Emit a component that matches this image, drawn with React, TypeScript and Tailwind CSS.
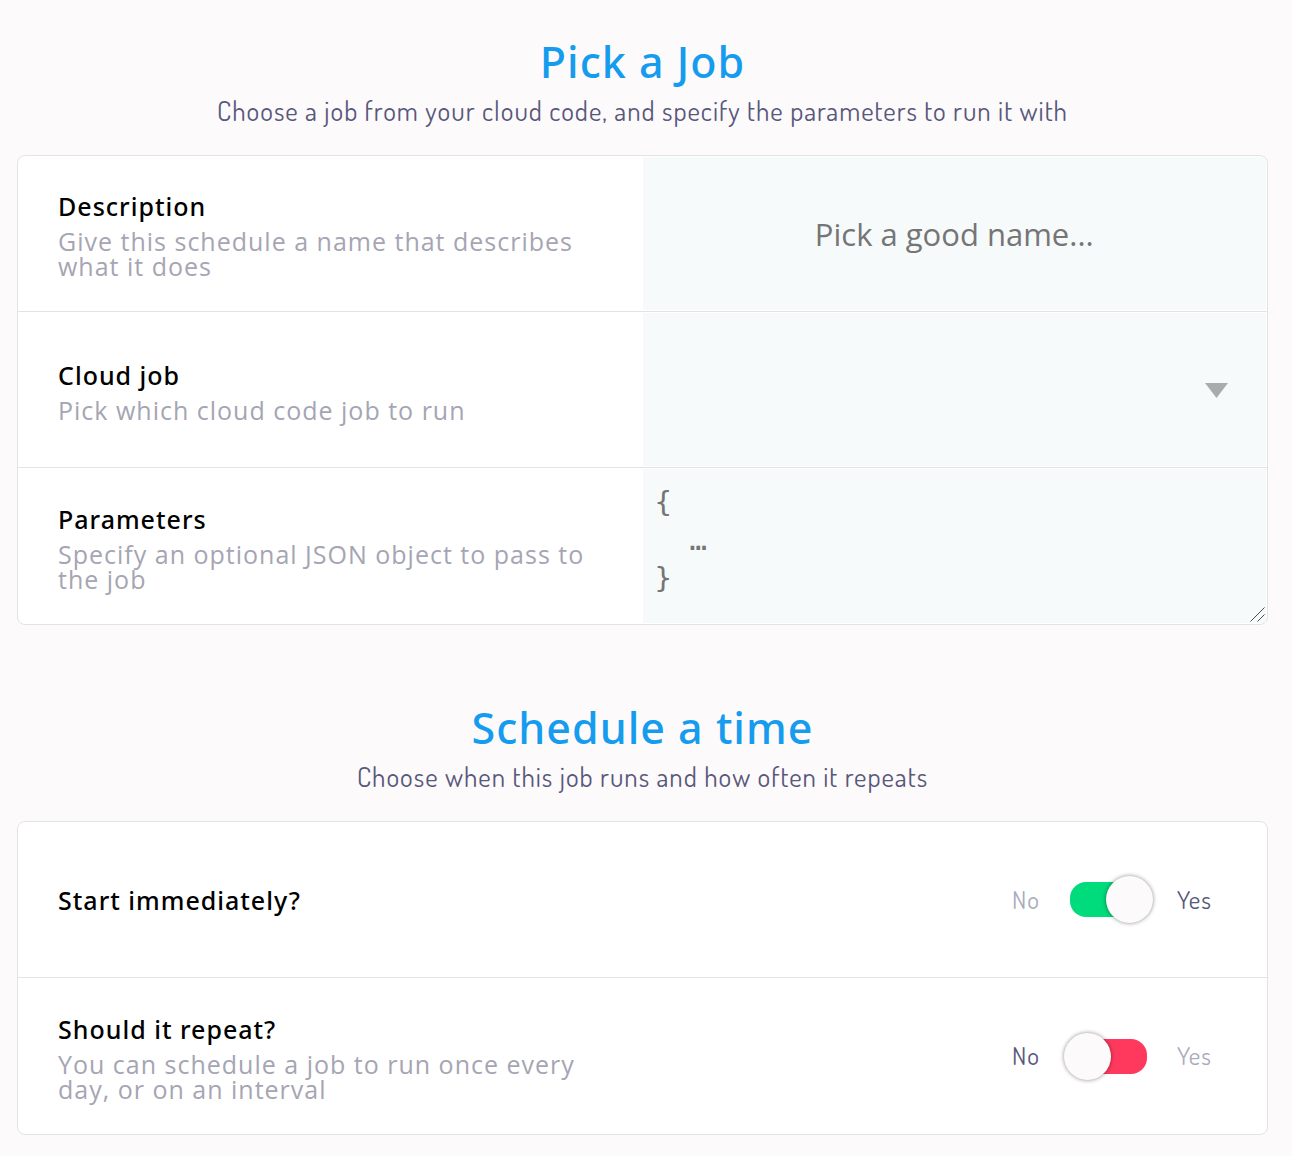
import type { ReactNode } from 'react';

function Section({ title, subtitle, children }: { title: string; subtitle: string; children: ReactNode }) {
  return (
    <section>
      <h2 className="text-center text-[43px] leading-[50px] font-medium tracking-[1px] text-[#169cee]">{title}</h2>
      <p className="mt-1 text-center font-['Dosis','Lato',sans-serif] text-[27px] leading-[38px] font-normal tracking-[1px] text-[#58587b]">{subtitle}</p>
      <div className="mt-[26px] divide-y divide-[#e3e3e5] overflow-hidden rounded-lg border border-[#e3e3e5] bg-white">{children}</div>
    </section>
  );
}

function Row({ id, label, note, children }: { id: string; label: string; note?: string; children: ReactNode }) {
  return (
    <div className="grid min-h-[156px] grid-cols-2">
      <div className="flex flex-col justify-center px-10">
        <label htmlFor={id} className="text-[25px] leading-[36px] font-medium tracking-[1px] text-black">{label}</label>
        {note && <p className="mt-[5px] font-['Open_Sans',sans-serif] text-[25px] leading-[25px] tracking-[1px] text-[#a5a5b3]">{note}</p>}
      </div>
      {children}
    </div>
  );
}

function Toggle({ id, on }: { id: string; on: boolean }) {
  return (
    <div className="flex items-center justify-end pr-[55px] font-['Dosis','Lato',sans-serif] text-[25px] font-normal tracking-[1px] text-[#58587b]">
      <span className={on ? 'opacity-50' : ''}>No</span>
      <span className="relative mx-6 flex h-[47px] w-[89px] items-center">
        <input id={id} type="checkbox" role="switch" defaultChecked={on} className="peer mx-auto h-[35px] w-[77px] appearance-none rounded-[16px] bg-[#ff395e] checked:bg-[#00db7c]" />
        <span className="pointer-events-none absolute left-0 size-[47px] rounded-full bg-[#fdfafb] shadow-[0_0_4px_rgba(0,0,0,0.45)] peer-checked:right-0 peer-checked:left-auto" />
      </span>
      <span className={on ? '' : 'opacity-50'}>Yes</span>
    </div>
  );
}

export default function App() {
  return (
    <main className="flex min-h-screen flex-col gap-[78px] bg-[#fdfafb] pt-[37px] pr-6 pb-[22px] pl-[17px] font-['Noto_Sans',sans-serif]">
      <Section title="Pick a Job" subtitle="Choose a job from your cloud code, and specify the parameters to run it with">
        <Row id="description" label="Description" note="Give this schedule a name that describes what it does">
          <input id="description" placeholder="Pick a good name..." className="my-px mr-px bg-[#f6fafb] pt-0.5 text-center font-['Open_Sans',sans-serif] text-[31px] outline-none placeholder:text-[#757575]" />
        </Row>
        <Row id="job" label="Cloud job" note="Pick which cloud code job to run">
          <div className="relative my-px mr-px flex bg-[#f6fafb]">
            <select id="job" className="w-full appearance-none bg-transparent outline-none" />
            <svg viewBox="0 0 23 15" className="pointer-events-none absolute top-[70px] right-[38px] h-[15px] w-[23px] fill-[#a9acac]"><path d="M0 0h23L11.5 15z" /></svg>
          </div>
        </Row>
        <Row id="parameters" label="Parameters" note="Specify an optional JSON object to pass to the job">
          <div className="relative my-px mr-px flex bg-[#f6fafb]">
            <textarea id="parameters" placeholder={'{\n  …\n}'} className="h-[154px] w-full resize-y bg-transparent px-3 py-[14px] font-['DejaVu_Sans_Mono',monospace] text-[29px] leading-[38px] outline-none placeholder:text-[#757575] [&::-webkit-resizer]:bg-transparent" />
            <svg viewBox="0 0 15 15" className="pointer-events-none absolute right-px bottom-px size-[15px] stroke-[#4b4f50]"><path d="M.5 14.5l14-14M7.5 14.5l7-7" /></svg>
          </div>
        </Row>
      </Section>
      <Section title="Schedule a time" subtitle="Choose when this job runs and how often it repeats">
        <Row id="start" label="Start immediately?"><Toggle id="start" on /></Row>
        <Row id="repeat" label="Should it repeat?" note="You can schedule a job to run once every day, or on an interval"><Toggle id="repeat" on={false} /></Row>
      </Section>
    </main>
  );
}
